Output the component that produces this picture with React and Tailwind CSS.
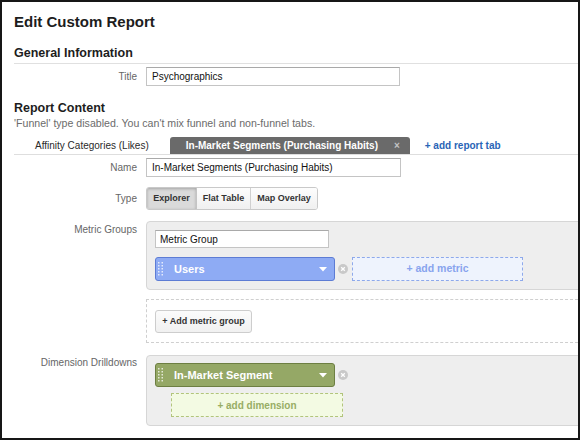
import React from 'react';

function Grip() {
  const rows = [0, 3, 6, 9, 12];
  return (
    <svg width="5" height="14" viewBox="0 0 5 14" className="shrink-0">
      {rows.map((y) => (
        <g key={y} fill="#ffffff" fillOpacity="0.75">
          <rect x="0" y={y} width="1.5" height="1.5" />
          <rect x="3.5" y={y} width="1.5" height="1.5" />
        </g>
      ))}
    </svg>
  );
}

function Caret() {
  return (
    <svg width="8" height="5" viewBox="0 0 8 5" className="shrink-0">
      <polygon points="0,0 8,0 4,4.5" fill="#ffffff" />
    </svg>
  );
}

function RemoveIcon() {
  return (
    <svg width="10" height="10" viewBox="0 0 10 10" className="shrink-0">
      <circle cx="5" cy="5" r="5" fill="#c9c9c9" />
      <path d="M3.2 3.2 L6.8 6.8 M6.8 3.2 L3.2 6.8" stroke="#ffffff" strokeWidth="1.3" />
    </svg>
  );
}

function Pill({ label, color }) {
  const styles =
    color === 'blue'
      ? 'bg-[#8eabf4] border-[#5d7cd4]'
      : 'bg-[#95a866] border-[#6d7f42]';
  return (
    <div className={`w-[180px] h-[24px] rounded-[3px] border ${styles} flex items-center pl-[2px] pr-[7px]`}>
      <Grip />
      <span className="ml-[11px] flex-1 text-[11px] font-bold text-white">{label}</span>
      <Caret />
    </div>
  );
}

export default function App() {
  return (
    <div className="w-[580px] h-[440px] bg-white border-2 border-[#171717] overflow-hidden font-['Liberation_Sans',Arial,Helvetica,sans-serif] text-[#222]">
      <div className="pl-3">
        <h1 className="pt-[11px] text-[15px] leading-[18px] font-bold text-[#1d1d1d]">Edit Custom Report</h1>

        <h2 className="mt-[15px] pb-[2px] border-b border-[#e0e0e0] text-[12.5px] leading-[15px] font-bold text-[#1d1d1d]">
          General Information
        </h2>

        <div className="mt-[3px] flex items-center">
          <div className="w-[123px] text-right text-[10px] text-[#666]">Title</div>
          <div className="ml-[9px] w-[254px] h-[19px] border border-[#c4c4c4] border-t-[#a9a9a9] flex items-center pl-[5px] text-[10px] text-[#111]">
            Psychographics
          </div>
        </div>

        <h2 className="mt-[15px] text-[12.5px] leading-[15px] font-bold text-[#1d1d1d]">Report Content</h2>
        <p className="mt-[1px] text-[10.6px] leading-[13px] text-[#6b6b6b]">
          'Funnel' type disabled. You can't mix funnel and non-funnel tabs.
        </p>

        <div className="mt-[7px] flex items-end border-b border-[#dedede]">
          <div className="h-[17px] pl-[21px] pr-[8px] flex items-center text-[10px] text-[#2a2a2a]">
            Affinity Categories (Likes)
          </div>
          <div className="ml-[13px] h-[17px] w-[240px] rounded-t-[3px] bg-[#6a6a6a] flex items-center pl-[16px] pr-[10px]">
            <span className="flex-1 text-[10px] font-bold text-white">In-Market Segments (Purchasing Habits)</span>
            <span className="text-[10px] font-bold text-[#c4c4c4]">×</span>
          </div>
          <div className="ml-[15px] h-[17px] flex items-center text-[10px] font-bold text-[#2964b6]">+ add report tab</div>
        </div>

        <div className="mt-[3px] flex items-center">
          <div className="w-[123px] text-right text-[10px] text-[#666]">Name</div>
          <div className="ml-[9px] w-[255px] h-[19px] border border-[#c4c4c4] border-t-[#a9a9a9] flex items-center pl-[5px] text-[10px] text-[#111]">
            In-Market Segments (Purchasing Habits)
          </div>
        </div>

        <div className="mt-[10px] flex items-center">
          <div className="w-[123px] text-right text-[10px] text-[#666]">Type</div>
          <div className="ml-[9px] flex h-[23px] rounded-[3px] border border-[#c9c9c9] overflow-hidden text-[9px] font-bold text-[#333]">
            <div className="w-[50px] flex items-center justify-center bg-[#dadada] shadow-[inset_0_1px_3px_rgba(0,0,0,0.25)] border-r border-[#c4c4c4]">
              Explorer
            </div>
            <div className="w-[54px] flex items-center justify-center bg-gradient-to-b from-[#fdfdfd] to-[#f0f0f0] border-r border-[#d0d0d0]">
              Flat Table
            </div>
            <div className="w-[66px] flex items-center justify-center bg-gradient-to-b from-[#fdfdfd] to-[#f0f0f0]">
              Map Overlay
            </div>
          </div>
        </div>

        <div className="mt-[11px] flex items-start">
          <div className="w-[123px] pt-[3px] text-right text-[10px] leading-[12px] text-[#666]">Metric Groups</div>
          <div className="ml-[9px] flex-1 -mr-[10px]">
            <div className="rounded-[4px] border border-[#d6d6d6] bg-[#eeeeee] pl-[8px] pt-[8px] pb-[8px]">
              <div className="w-[174px] h-[18px] border border-[#c4c4c4] border-t-[#a9a9a9] bg-white flex items-center pl-[4px] text-[10px] text-[#111]">
                Metric Group
              </div>
              <div className="mt-[9px] flex items-center">
                <Pill label="Users" color="blue" />
                <div className="ml-[3px]">
                  <RemoveIcon />
                </div>
                <div className="ml-[4px] w-[171px] h-[24px] border border-dashed border-[#8ea9eb] bg-[#eef3fd] flex items-center justify-center text-[10.5px] font-bold text-[#88a4ee]">
                  + add metric
                </div>
              </div>
            </div>

            <div className="mt-[9px] border-t border-l border-b border-dashed border-[#cfcfcf] pl-[8px] pt-[10px] pb-[9px]">
              <div className="w-[97px] h-[23px] rounded-[3px] border border-[#cdcdcd] bg-gradient-to-b from-[#fbfbfb] to-[#f1f1f1] flex items-center justify-center text-[9px] font-bold text-[#333]">
                + Add metric group
              </div>
            </div>
          </div>
        </div>

        <div className="mt-[12px] flex items-start">
          <div className="w-[123px] pt-[2px] text-right text-[10px] leading-[12px] text-[#666]">Dimension Drilldowns</div>
          <div className="ml-[9px] flex-1 -mr-[10px]">
            <div className="rounded-[4px] border border-[#d6d6d6] bg-[#eeeeee] pl-[8px] pt-[7px] pb-[8px]">
              <div className="flex items-center">
                <Pill label="In-Market Segment" color="green" />
                <div className="ml-[3px]">
                  <RemoveIcon />
                </div>
              </div>
              <div className="mt-[6px] ml-[16px] w-[172px] h-[24px] border border-dashed border-[#b2c47c] bg-[#f3fae3] flex items-center justify-center text-[10px] font-bold text-[#98ad65]">
                + add dimension
              </div>
            </div>
          </div>
        </div>
      </div>
    </div>
  );
}
